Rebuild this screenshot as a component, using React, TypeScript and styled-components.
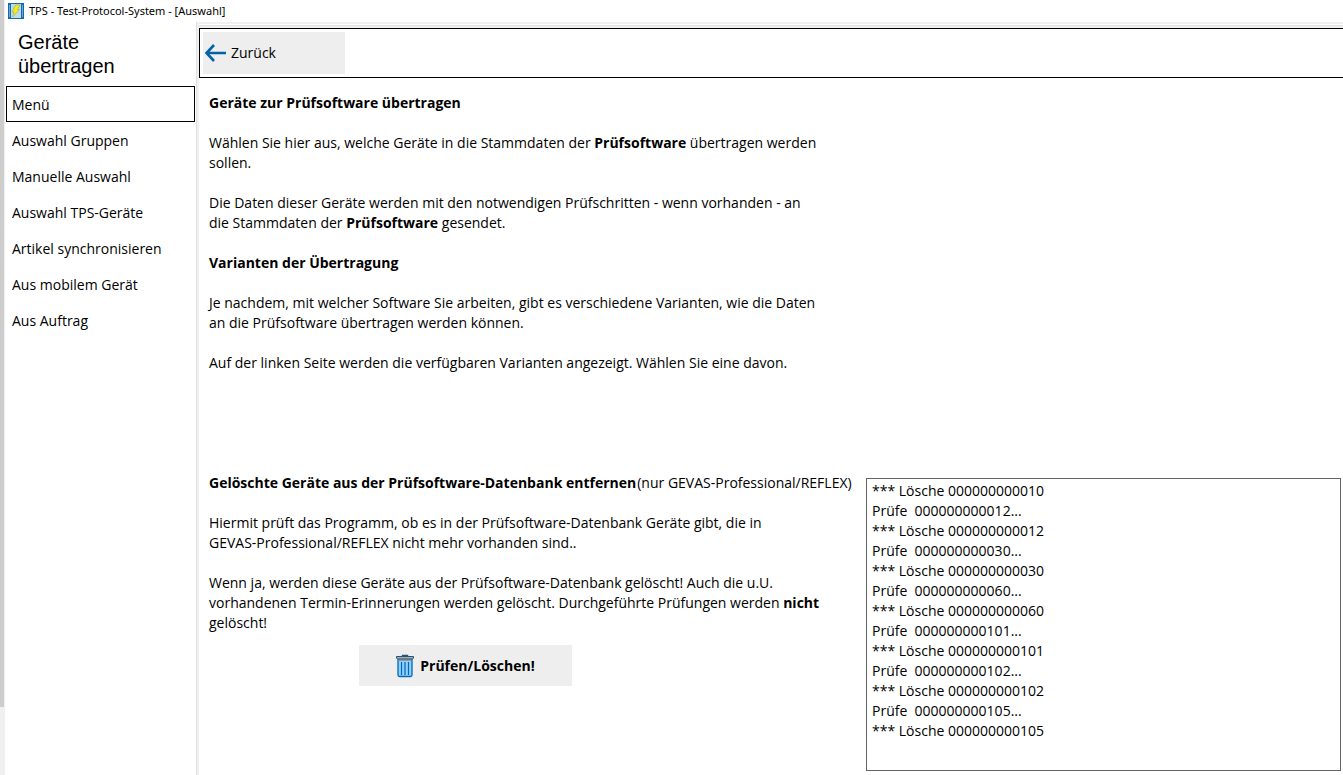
import React from 'react';
import styled, { createGlobalStyle } from 'styled-components';

const GlobalStyle = createGlobalStyle`
  * { box-sizing: border-box; }
  body {
    margin: 0;
    background: #fff;
    color: #000;
    font: 14px/20px 'Open Sans', 'Noto Sans', sans-serif;
  }
  button, textarea { font: inherit; color: inherit; }
`;

const Window = styled.div`
  display: flex;
  min-height: 100vh;
`;

const ScrollGutter = styled.div`
  display: flex;
  flex-direction: column;
  width: 5px;
  padding: 0 1px 68px 0;
  background: #f0f0f0;
`;

const ScrollThumb = styled.div`
  flex: 1;
  background: #cdcdcd;
`;

const Frame = styled.div`
  display: flex;
  flex: 1;
  flex-direction: column;
  min-width: 0;
`;

const TitleBar = styled.header`
  display: flex;
  align-items: center;
  gap: 5px;
  height: 22px;
  padding-left: 3px;
  font-family: 'Noto Sans', 'Open Sans', sans-serif;
  font-size: 11px;
`;

const Body = styled.div`
  display: flex;
  flex: 1;
`;

const Sidebar = styled.aside`
  width: 191px;
  flex: none;
  padding: 8px 1px 0;
`;

const SidebarTitle = styled.h1`
  margin: 0 0 8px 12px;
  width: 130px;
  font: 20px/24px 'Liberation Sans', Arial, sans-serif;
`;

const MenuItem = styled.button<{ $active?: boolean }>`
  display: block;
  width: 189px;
  height: 36px;
  padding: 2px 5px 0;
  border: 1px solid ${(p) => (p.$active ? '#000' : 'transparent')};
  background: #fff;
  text-align: left;
`;

const Main = styled.main`
  flex: 1;
  min-width: 0;
  border-left: 1px solid #e0e0e0;
  box-shadow: inset 2px 0 #f0f0f0;
  padding-left: 2px;
`;

const TopEdge = styled.div`
  height: 6px;
  border-top: 2px solid #f0f0f0;
  border-bottom: 2px solid #f0f0f0;
  box-shadow: inset 0 -1px #e0e0e0;
`;

const Toolbar = styled.div`
  display: flex;
  height: 50px;
  padding: 3px;
  border: 1px solid #000;
  border-right: 0;
`;

const BackButton = styled.button`
  display: flex;
  align-items: center;
  gap: 4px;
  width: 142px;
  height: 42px;
  padding: 0 2px;
  border: 0;
  background: #eee;
`;

const Intro = styled.section`
  height: 380px;
  padding: 0 10px;
`;

const Content = styled.div`
  padding-top: 15px;
`;

const Heading = styled.h2`
  margin: 0 0 20px;
  font-size: 14px;
  line-height: 20px;
  white-space: nowrap;

  span { margin-left: 1px; font-weight: 400; }
`;

const Text = styled.p`
  margin: 0 0 20px;
  white-space: nowrap;
`;

const Cleanup = styled.section`
  display: flex;
  padding: 0 2px 0 10px;
`;

const CleanupInfo = styled.div`
  flex: none;
  width: 657px;
`;

const DeleteButton = styled.button`
  display: flex;
  align-items: center;
  justify-content: center;
  gap: 4px;
  width: 213px;
  height: 41px;
  margin: -8px 0 0 150px;
  padding: 0;
  border: 0;
  background: #eee;
  font-weight: 700;
`;

const Log = styled.textarea`
  display: block;
  flex: 1;
  min-width: 0;
  height: 293px;
  margin-top: 5px;
  padding: 2px 5px;
  border: 1px solid #646464;
  outline: 0;
  resize: none;
  background: #fff;
`;

const AppIcon = () => (
  <svg width="16" height="16" viewBox="0 0 16 16" aria-hidden="true">
    <path fill="#0f6ab0" d="M0 0h16v16H0z" />
    <path fill="#c3dbe6" d="M3 1h10v14H3z" />
    <path fill="#6fa6cf" d="M1 2h1v12H1zM14 2h1v12h-1z" />
    <path fill="#f5ec1e" stroke="#9fb35c" strokeWidth=".7" d="M7.500 2H12L9.500 6.500h2L4.500 14 6 9H4z" />
  </svg>
);

const BackArrow = () => (
  <svg width="22" height="18" viewBox="0 0 22 18" aria-hidden="true">
    <path d="M1.500 9H21M9 1L1.500 9l7.500 8" fill="none" stroke="#0063a8" strokeWidth="2.600" />
  </svg>
);

const TrashIcon = () => (
  <svg width="20" height="24" viewBox="0 0 20 24" aria-hidden="true">
    <path d="M6.500 3V1.500h5V3" fill="none" stroke="#24567d" strokeWidth="1.400" />
    <path d="M2 5.500V21q0 1.500 1.500 1.500h11q1.500 0 1.500-1.500V5.500z" fill="#8fd0ff" stroke="#0067b8" strokeWidth="1.300" />
    <path d="M2.500 4.500h13V7h-13z" fill="#999" />
    <path d="M.5 2.500h17v1.500l-1 1h-15l-1-1z" fill="#aaa" stroke="#24567d" />
    <path d="M5.500 8v13M9 8v13M12.500 8v13" stroke="#0067b8" strokeWidth="1.200" />
  </svg>
);

const menu = [
  'Menü',
  'Auswahl Gruppen',
  'Manuelle Auswahl',
  'Auswahl TPS-Geräte',
  'Artikel synchronisieren',
  'Aus mobilem Gerät',
  'Aus Auftrag',
];

const checked = ['012', '030', '060', '101', '102', '105'];
const log = [
  '*** Lösche 000000000010',
  ...checked.flatMap((n) => [`Prüfe  000000000${n}...`, `*** Lösche 000000000${n}`]),
].join('\n');

export default function App() {
  return (
    <>
      <GlobalStyle />
      <Window>
        <ScrollGutter><ScrollThumb /></ScrollGutter>
        <Frame>
          <TitleBar><AppIcon />TPS - Test-Protocol-System - [Auswahl]</TitleBar>
          <Body>
            <Sidebar>
              <SidebarTitle>Geräte übertragen</SidebarTitle>
              <nav>
                {menu.map((label, i) => (
                  <MenuItem key={label} type="button" $active={i === 0}>{label}</MenuItem>
                ))}
              </nav>
            </Sidebar>
            <Main>
              <TopEdge />
              <Toolbar>
                <BackButton type="button"><BackArrow />Zurück</BackButton>
              </Toolbar>
              <Content>
                <Intro>
                  <Heading>Geräte zur Prüfsoftware übertragen</Heading>
                  <Text>
                    Wählen Sie hier aus, welche Geräte in die Stammdaten der <b>Prüfsoftware</b> übertragen werden<br />
                    sollen.
                  </Text>
                  <Text>
                    Die Daten dieser Geräte werden mit den notwendigen Prüfschritten - wenn vorhanden - an<br />
                    die Stammdaten der <b>Prüfsoftware</b> gesendet.
                  </Text>
                  <Heading>Varianten der Übertragung</Heading>
                  <Text>
                    Je nachdem, mit welcher Software Sie arbeiten, gibt es verschiedene Varianten, wie die Daten<br />
                    an die Prüfsoftware übertragen werden können.
                  </Text>
                  <Text>Auf der linken Seite werden die verfügbaren Varianten angezeigt. Wählen Sie eine davon.</Text>
                </Intro>
                <Cleanup>
                  <CleanupInfo>
                    <Heading>
                      Gelöschte Geräte aus der Prüfsoftware-Datenbank entfernen<span>(nur GEVAS-Professional/REFLEX)</span>
                    </Heading>
                    <Text>
                      Hiermit prüft das Programm, ob es in der Prüfsoftware-Datenbank Geräte gibt, die in<br />
                      GEVAS-Professional/REFLEX nicht mehr vorhanden sind..
                    </Text>
                    <Text>
                      Wenn ja, werden diese Geräte aus der Prüfsoftware-Datenbank gelöscht! Auch die u.U.<br />
                      vorhandenen Termin-Erinnerungen werden gelöscht. Durchgeführte Prüfungen werden <b>nicht</b><br />
                      gelöscht!
                    </Text>
                    <DeleteButton type="button"><TrashIcon />Prüfen/Löschen!</DeleteButton>
                  </CleanupInfo>
                  <Log readOnly aria-label="Protokoll" value={log} />
                </Cleanup>
              </Content>
            </Main>
          </Body>
        </Frame>
      </Window>
    </>
  );
}
